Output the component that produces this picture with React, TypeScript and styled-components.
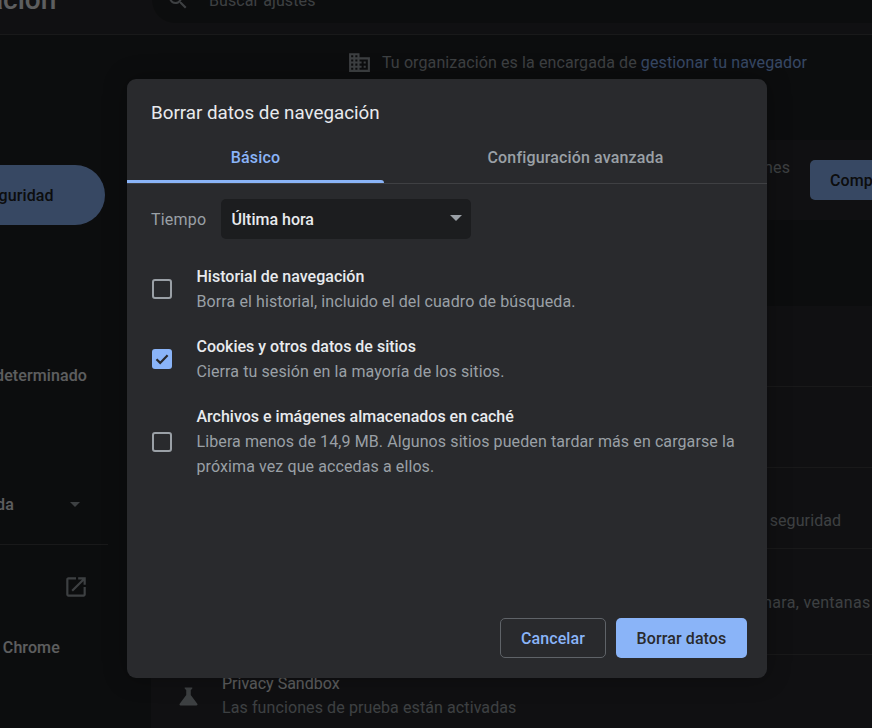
import styled, { createGlobalStyle } from 'styled-components';

const GlobalStyle = createGlobalStyle`
  html, body {
    margin: 0;
    padding: 0;
    height: 100%;
    overflow: hidden;
    background: #202124;
  }
  * {
    box-sizing: border-box;
  }
`

const NAV_ITEMS = [
  { label: 'Tú y Google' },
  { label: 'Autocompletar' },
  { label: 'Privacidad y seguridad', active: true },
  { label: 'Apariencia' },
  { label: 'Buscador' },
  { label: 'Navegador predeterminado' },
  { label: 'Al iniciar' },
];

const ROWS = [
  { title: 'Borrar datos de navegación', sub: 'Borra el historial, las cookies, la caché y mucho más' },
  { title: 'Cookies y otros datos de sitios', sub: 'Las cookies de terceros están bloqueadas en modo Incógnito' },
  { title: 'Seguridad', sub: 'Navegación segura (protección frente a sitios peligrosos) y otros ajustes de seguridad' },
  { title: 'Configuración de sitios', sub: 'Controla qué información pueden usar y mostrar los sitios (ubicación, cámara, ventanas emergentes y más)', tall: true },
  { title: 'Privacy Sandbox', sub: 'Las funciones de prueba están activadas', flask: true },
];

const CLEAR_OPTIONS = [
  { title: 'Historial de navegación', sub: 'Borra el historial, incluido el del cuadro de búsqueda.', checked: false },
  { title: 'Cookies y otros datos de sitios', sub: 'Cierra tu sesión en la mayoría de los sitios.', checked: true },
  { title: 'Archivos e imágenes almacenados en caché', sub: 'Libera menos de 14,9 MB. Algunos sitios pueden tardar más en cargarse la próxima vez que accedas a ellos.', checked: false },
];

const App = (): JSX.Element => {
  return (
    <Page>
      <GlobalStyle />
      <Header>
        <Title>Configuración</Title>
        <SearchBox>
          <SearchIcon viewBox="0 0 24 24" fill="currentColor">
            <path d="M15.5 14h-.79l-.28-.27C15.41 12.59 16 11.11 16 9.5 16 5.91 13.09 3 9.5 3S3 5.91 3 9.5 5.91 16 9.5 16c1.61 0 3.09-.59 4.23-1.57l.27.28v.79l5 4.99L20.49 19l-4.99-5zm-6 0C7.01 14 5 11.99 5 9.5S7.01 5 9.5 5 14 7.01 14 9.5 11.99 14 9.5 14z" />
          </SearchIcon>
          Buscar ajustes
        </SearchBox>
      </Header>
      <Body>
        <Sidebar>
          {NAV_ITEMS.map(item => (
            <NavItem key={item.label} $active={item.active}>{item.label}</NavItem>
          ))}
          <AdvancedItem>
            <AdvancedLabel>Configuración avanzada</AdvancedLabel>
            <Caret />
          </AdvancedItem>
          <SideDivider />
          <NavItem>
            Extensiones
            <ExternalIcon viewBox="0 0 24 24" fill="currentColor">
              <path d="M19 19H5V5h7V3H5c-1.11 0-2 .9-2 2v14c0 1.1.89 2 2 2h14c1.1 0 2-.9 2-2v-7h-2v7zM14 3v2h3.59l-9.83 9.83 1.41 1.41L19 6.41V10h2V3h-7z" />
            </ExternalIcon>
          </NavItem>
          <NavItem>Información de Chrome</NavItem>
        </Sidebar>
        <Main>
          <Notice>
            <NoticeIcon viewBox="0 0 24 24" fill="currentColor">
              <path d="M12 7V3H2v18h20V7H12zM6 19H4v-2h2v2zm0-4H4v-2h2v2zm0-4H4V9h2v2zm0-4H4V5h2v2zm4 12H8v-2h2v2zm0-4H8v-2h2v2zm0-4H8V9h2v2zm0-4H8V5h2v2zm10 12h-8v-2h2v-2h-2v-2h2v-2h-2V9h8v10zm-2-8h-2v2h2v-2zm0 4h-2v2h2v-2z" />
            </NoticeIcon>
            Tu organización es la encargada de&nbsp;<NoticeLink>gestionar tu navegador</NoticeLink>
          </Notice>
          <SafetyCard>
            <SafetyText>
              <SafetyLine>Chrome te ayuda a protegerte de las filtraciones de datos, de las extensiones</SafetyLine>
              <SafetyHint>dañinas y de otros problemas</SafetyHint>
            </SafetyText>
            <CheckNow>Comprobar ahora</CheckNow>
          </SafetyCard>
          <SectionCard>
            {ROWS.map(row => (
              <Row key={row.title} $tall={row.tall}>
                <RowIcon>
                  {row.flask && (
                    <svg viewBox="0 0 24 24" width="27" height="27" fill="currentColor">
                      <path d="M19.8 18.4L14 10.67V6.5l1.35-1.69c.26-.33.03-.81-.39-.81H9.04c-.42 0-.65.48-.39.81L10 6.5v4.17L4.2 18.4c-.49.66-.02 1.6.8 1.6h14c.82 0 1.29-.94.8-1.6z" />
                    </svg>
                  )}
                </RowIcon>
                <RowText>
                  <RowTitle>{row.title}</RowTitle>
                  <RowSub $wide={row.tall}>{row.sub}</RowSub>
                </RowText>
              </Row>
            ))}
          </SectionCard>
        </Main>
      </Body>
      <Scrim>
        <Dialog>
          <DialogTitle>Borrar datos de navegación</DialogTitle>
          <Tabs>
            <Tab $active>Básico</Tab>
            <Tab $grow>Configuración avanzada</Tab>
          </Tabs>
          <DialogBody>
            <TimeRow>
              <TimeLabel>Tiempo</TimeLabel>
              <TimeSelect>
                Última hora
                <SelectArrow />
              </TimeSelect>
            </TimeRow>
            {CLEAR_OPTIONS.map(option => (
              <Option key={option.title}>
                <Checkbox $checked={option.checked}>
                  {option.checked && (
                    <svg viewBox="0 0 20 20" width="20" height="20" fill="none" stroke="#292a2d" strokeWidth="2.2">
                      <path d="M4.5 10.2l3.7 3.7 7.4-7.6" />
                    </svg>
                  )}
                </Checkbox>
                <OptionText>
                  <OptionTitle>{option.title}</OptionTitle>
                  <OptionSub>{option.sub}</OptionSub>
                </OptionText>
              </Option>
            ))}
          </DialogBody>
          <Footer>
            <CancelButton>Cancelar</CancelButton>
            <ConfirmButton>Borrar datos</ConfirmButton>
          </Footer>
        </Dialog>
      </Scrim>
    </Page>
  )
};

export default App;

const Page = styled.div`
  position: relative;
  width: 872px;
  height: 728px;
  overflow: hidden;
  background: #202124;
  color: #e8eaed;
  font-family: Roboto, "Liberation Sans", sans-serif;
`
const Header = styled.header`
  display: flex;
  align-items: flex-start;
  height: 58px;
  margin-top: -23px;
  margin-left: -119px;
  border-bottom: 1px solid #3f4043;
  background: #292a2d;
`
const Title = styled.h1`
  flex: none;
  width: 271px;
  margin: 0;
  font-size: 28px;
  font-weight: 500;
  line-height: 46px;
  color: #e8eaed;
`
const SearchBox = styled.div`
  display: flex;
  flex: none;
  align-items: center;
  width: 900px;
  height: 46px;
  padding-left: 14px;
  border-radius: 23px;
  background: #202124;
  color: #9aa0a6;
  font-size: 16px;
  letter-spacing: 0.1px;
`
const SearchIcon = styled.svg`
  width: 24px;
  height: 24px;
  margin-right: 19px;
`
const Body = styled.div`
  display: flex;
`
const Sidebar = styled.nav`
  flex: none;
  width: 281px;
  margin-left: -130px;
  padding-top: 10px;
`
const NavItem = styled.div<{ $active?: boolean }>`
  display: flex;
  align-items: center;
  justify-content: space-between;
  width: 235px;
  height: 60px;
  padding: 0 20px 0 19px;
  border-radius: 0 30px 30px 0;
  background: ${props => props.$active ? '#8ab4f8' : 'transparent'};
  color: ${props => props.$active ? '#202124' : '#e8eaed'};
  font-size: 16px;
  font-weight: 500;
  letter-spacing: 0.1px;
  white-space: nowrap;
`
const AdvancedItem = styled(NavItem)`
  margin-top: 9px;
  padding-left: 0;
  padding-right: 25px;
`
const AdvancedLabel = styled.span`
  margin-left: -31px;
`
const Caret = styled.span`
  width: 0;
  height: 0;
  border-left: 5px solid transparent;
  border-right: 5px solid transparent;
  border-top: 5px solid #9aa0a6;
`
const SideDivider = styled.div`
  width: 238px;
  height: 1px;
  margin: 10px 0 12px;
  background: #3f4043;
`
const ExternalIcon = styled.svg`
  width: 26px;
  height: 26px;
  margin-right: -4px;
  color: #9aa0a6;
`
const Main = styled.main`
  flex: none;
  width: 852px;
`
const Notice = styled.div`
  display: flex;
  align-items: center;
  justify-content: center;
  height: 105px;
  padding-bottom: 51px;
  color: #9aa0a6;
  font-size: 16px;
  letter-spacing: 0.11px;
`
const NoticeIcon = styled.svg`
  width: 25px;
  height: 25px;
  margin-right: 10px;
`
const NoticeLink = styled.span`
  color: #8ab4f8;
`
const SafetyCard = styled.section`
  display: flex;
  align-items: center;
  gap: 20px;
  height: 80px;
  margin-bottom: 86px;
  border-radius: 8px;
  background: #292a2d;
`
const SafetyText = styled.div`
  flex: none;
  width: 639px;
  color: #9aa0a6;
  font-size: 16px;
  line-height: 24px;
  letter-spacing: 0.1px;
`
const SafetyLine = styled.div`
  text-align: right;
`
const SafetyHint = styled.div`
  padding-left: 72px;
`
const CheckNow = styled.button`
  flex: none;
  height: 40px;
  padding: 0 20px;
  border: none;
  border-radius: 5px;
  background: #8ab4f8;
  color: #202124;
  font-family: inherit;
  font-size: 16px;
  font-weight: 500;
  letter-spacing: 0.1px;
`
const SectionCard = styled.section`
  border-radius: 8px;
  background: #292a2d;
`
const Row = styled.div<{ $tall?: boolean }>`
  display: flex;
  align-items: ${props => props.$tall ? 'flex-start' : 'center'};
  height: ${props => props.$tall ? '106px' : '81px'};
  padding-top: ${props => props.$tall ? '18px' : '2px'};
  border-bottom: 1px solid #3f4043;
`
const RowIcon = styled.div`
  display: flex;
  flex: none;
  justify-content: center;
  width: 71px;
  padding-left: 3px;
  color: #9aa0a6;
`
const RowText = styled.div`
  width: 660px;
`
const RowTitle = styled.div`
  color: #e8eaed;
  font-size: 16px;
  line-height: 24px;
`
const RowSub = styled.div<{ $wide?: boolean }>`
  color: #9aa0a6;
  font-size: 16px;
  line-height: 24px;
  letter-spacing: ${props => props.$wide ? '0.3px' : '0.1px'};
`
const Scrim = styled.div`
  position: absolute;
  inset: 0;
  padding: 79px 0 0 127px;
  background: rgba(0, 0, 0, 0.6);
`
const Dialog = styled.div`
  display: flex;
  flex-direction: column;
  width: 640px;
  height: 599px;
  border-radius: 9px;
  background: #292a2d;
  box-shadow: 0 0 24px rgba(0, 0, 0, 0.3);
`
const DialogTitle = styled.h2`
  margin: 0;
  padding: 22px 24px 0;
  color: #e8eaed;
  font-size: 18.8px;
  font-weight: 400;
  line-height: 24px;
`
const Tabs = styled.div`
  display: flex;
  height: 59px;
  padding-top: 9px;
  border-bottom: 1px solid #3f4043;
`
const Tab = styled.div<{ $active?: boolean; $grow?: boolean }>`
  position: relative;
  display: flex;
  flex: ${props => props.$grow ? '1' : 'none'};
  align-items: center;
  justify-content: center;
  width: 257px;
  height: 49px;
  padding-bottom: 3px;
  color: ${props => props.$active ? '#8ab4f8' : '#9aa0a6'};
  font-size: 16px;
  font-weight: 500;
  letter-spacing: 0.15px;

  &::after {
    content: '';
    display: ${props => props.$active ? 'block' : 'none'};
    position: absolute;
    left: 0;
    right: 0;
    bottom: 0;
    height: 3px;
    border-radius: 0 3px 0 0;
    background: #8ab4f8;
  }
`
const DialogBody = styled.div`
  flex: 1;
  padding: 15px 24px 0;
`
const TimeRow = styled.div`
  display: flex;
  align-items: center;
  margin-bottom: 25px;
`
const TimeLabel = styled.span`
  width: 70px;
  color: #9aa0a6;
  font-size: 16px;
  letter-spacing: 0.2px;
`
const TimeSelect = styled.div`
  display: flex;
  align-items: center;
  justify-content: space-between;
  width: 250px;
  height: 40px;
  padding: 0 9px 0 10.5px;
  border-radius: 5px;
  background: #1c1d1f;
  color: #e8eaed;
  font-size: 16px;
  font-weight: 500;
`
const SelectArrow = styled.span`
  width: 0;
  height: 0;
  margin-top: -2px;
  border-left: 6.5px solid transparent;
  border-right: 6.5px solid transparent;
  border-top: 6.5px solid #9aa0a6;
`
const Option = styled.div`
  display: flex;
  align-items: center;
  margin-bottom: 20px;
`
const Checkbox = styled.span<{ $checked: boolean }>`
  flex: none;
  width: 20px;
  height: 20px;
  margin: 0 24.5px 0 1px;
  border: ${props => props.$checked ? 'none' : '2px solid #9aa0a6'};
  border-radius: 3px;
  background: ${props => props.$checked ? '#8ab4f8' : 'transparent'};
`
const OptionText = styled.div`
  flex: 1;
`
const OptionTitle = styled.div`
  color: #e8eaed;
  font-size: 16px;
  font-weight: 500;
  line-height: 25px;
`
const OptionSub = styled.div`
  color: #9aa0a6;
  font-size: 16px;
  line-height: 25px;
  letter-spacing: 0.1px;
`
const Footer = styled.div`
  display: flex;
  justify-content: flex-end;
  gap: 10px;
  padding: 0 20px 20px;
`
const CancelButton = styled.button`
  width: 106px;
  height: 40px;
  border: 1px solid #5f6368;
  border-radius: 5px;
  background: transparent;
  color: #8ab4f8;
  font-family: inherit;
  font-size: 16px;
  font-weight: 500;
  letter-spacing: 0.1px;
`
const ConfirmButton = styled(CancelButton)`
  width: 131px;
  border: none;
  background: #8ab4f8;
  color: #292a2d;
`
